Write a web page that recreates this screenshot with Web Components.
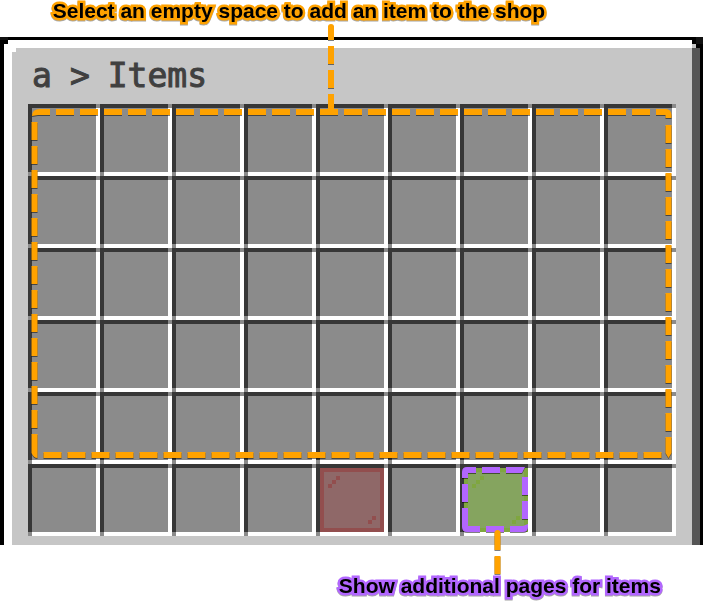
<!DOCTYPE html>
<html lang="en">
<head>
<meta charset="utf-8">
<title>Shop items</title>
<style>
  body { margin: 0; background: #fff; }
</style>
</head>
<body>
<shop-guide></shop-guide>
<script>
class ShadowElement extends HTMLElement {
  constructor() {
    super();
    this.attachShadow({ mode: 'open' }).innerHTML = this.render();
  }
  render() { return '<slot></slot>'; }
}

/* Outlined caption */
customElements.define('callout-label', class extends ShadowElement {
  render() {
    return `<style>
      :host { display: block; font: bold 21px/22px "Liberation Sans", Arial, sans-serif; color: #000; white-space: nowrap; }
      p { margin: 0; -webkit-text-stroke: 5px var(--outline, #ffa200); paint-order: stroke fill; stroke-linejoin: round;
          filter: drop-shadow(0 1px 0 rgb(0 0 0 / .35)); }
    </style><p><slot></slot></p>`;
  }
});

/* Breadcrumb title */
customElements.define('crumb-title', class extends ShadowElement {
  render() {
    return `<style>
      :host { display: block; }
      h1 { margin: 0; display: flex; gap: 18px; font: normal 33px/40px "DejaVu Sans Mono", monospace; color: #404040; -webkit-text-stroke: 1px #404040; }
    </style><h1><slot name="shop"></slot><span>&gt;</span><slot name="page"></slot></h1>`;
  }
});

/* Coloured glass pane */
customElements.define('glass-pane', class extends ShadowElement {
  render() {
    return `<style>
      :host { display: block; height: 100%; }
      svg { display: block; width: 100%; height: 100%; }
      .edge { fill: var(--edge); } .face { fill: var(--face); }
    </style>
    <svg viewBox="0 0 16 16" shape-rendering="crispEdges" aria-hidden="true">
      <path class="edge" d="M0 0h16v16H0z"/><path class="face" d="M1 1h14v14H1z"/>
      <path class="edge" d="M4 2h1v1H4zM3 3h1v1H3zM2 4h1v1H2zM13 12h1v1h-1zM12 13h1v1h-1z"/>
    </svg>`;
  }
});

/* Inventory slot */
customElements.define('item-slot', class extends ShadowElement {
  render() {
    return `<style>
      :host { display: block; aspect-ratio: 1; }
      button { display: block; box-sizing: border-box; width: 100%; height: 100%; margin: 0; padding: 4px; border: 0; cursor: pointer;
        background:
          linear-gradient(#373737, #373737) left top / calc(100% - 4px) 4px no-repeat,
          linear-gradient(#373737, #373737) left top / 4px calc(100% - 4px) no-repeat,
          linear-gradient(#fff, #fff) right bottom / 4px calc(100% - 4px) no-repeat,
          linear-gradient(#fff, #fff) right bottom / calc(100% - 4px) 4px no-repeat,
          #8b8b8b; }
    </style><button type="button"><slot></slot></button>`;
  }
  connectedCallback() {
    this.shadowRoot.querySelector('button').setAttribute('aria-label', this.getAttribute('label') || 'Empty slot');
  }
});

/* Dashed highlights and leader lines over the grid */
customElements.define('guide-lines', class extends ShadowElement {
  render() {
    return `<style>
      :host { display: block; position: absolute; inset: 0; pointer-events: none; }
      svg { display: block; width: 100%; height: 100%; overflow: visible; filter: drop-shadow(0 1px 0 rgb(0 0 0 / .5)); }
      path { fill: none; stroke-width: 6; }
      .add { stroke: #ffa200; } .more { stroke: #b266ff; }
      .dash { stroke-dasharray: 18 6; }
      .cap { stroke: none; fill: #ffa200; }
      .corner { stroke: none; fill: #b266ff; }
    </style>
    <svg viewBox="0 0 648 432" aria-hidden="true">
      <g class="add">
        <path class="dash" d="M28 8H628"/>
        <path class="cap" d="M4 12q0-7 8-7h10v6h-12zM628 5h10q5 0 5.500 6v3h-6v-3h-9.500z"/>
        <path class="dash" d="M640.5 21V333"/>
        <path class="dash" d="M15.500 351H634"/>
        <path class="dash" d="M6.500 18V330"/>
        <path class="cap" d="M3.500 330h6v24q-4 0-6-5zM637.500 333h6v16l-3 5-3-5z"/>
        <path class="cap" d="M300-64v-13q0-3 3-3t3 3v13z"/>
        <path class="dash" d="M303-58V-16"/>
        <path class="cap" d="M300-10h6v18q0 3-3 3t-3-3z"/>
      </g>
      <g class="more">
        <path class="dash" d="M454 366H472"/>
        <path class="dash" d="M437 380V422"/>
        <path class="dash" d="M458 425H476"/>
        <path class="dash" d="M497 373V415"/>
        <path class="corner" d="M434 374v-6q0-5 5-5h9v6h-8v5zM478 363h19l-3 6h-16zM434 418h6v4h12v6h-13q-5 0-5-5zM482 422h13l5-2v3q0 5-5 5h-13z"/>
      </g>
      <g class="add">
        <path class="cap" d="M466.500 446v-17q0-3 3-3t3 3v17z"/>
        <path d="M469.500 452V470"/>
      </g>
    </svg>`;
  }
});

/* Grid of slots */
customElements.define('slot-grid', class extends ShadowElement {
  render() {
    const cells = Array.from({ length: 54 }, (_, i) => {
      if (i === 49) return '<item-slot label="Close"><glass-pane class="red"></glass-pane></item-slot>';
      if (i === 51) return '<item-slot label="Next page"><glass-pane class="green"></glass-pane></item-slot>';
      return '<item-slot></item-slot>';
    }).join('');
    return `<style>
      :host { display: block; position: relative; }
      .grid { display: grid; grid-template-columns: repeat(9, 1fr); }
      .red { --edge: #924e4e; --face: #8f6868; }
      .green { --edge: #7fa63f; --face: #85a45f; }
    </style><div class="grid">${cells}</div><guide-lines></guide-lines>`;
  }
});

/* Bevelled chest window */
customElements.define('chest-window', class extends ShadowElement {
  render() {
    return `<style>
      :host { display: block; position: relative; border: solid #000; border-width: 3px 3px 0 4px; }
      .bevel { border: solid; border-width: 8px 8px 0 8px; border-color: #fff #555 #fff #fff; padding: 8px 16px 9px; background: #c6c6c6; }
      header { padding: 0 4px 8px; }
      .corner { position: absolute; top: -3px; height: 16px; }
      .left { left: -4px; width: 20px; } .right { right: -3px; width: 11px; }
    </style>
    <div class="bevel"><header><slot name="title"></slot></header><slot></slot></div>
    <svg class="corner left" viewBox="0 0 20 16" shape-rendering="crispEdges" aria-hidden="true">
      <path fill="#111" d="M0 0h8v3H0z"/><path d="M0 3h8v4H4v4H0z"/><path fill="#fff" d="M12 11h4v4h-4z"/>
    </svg>
    <svg class="corner right" viewBox="0 0 11 16" shape-rendering="crispEdges" aria-hidden="true">
      <path d="M0 3h4v4h4v4h3V0H0z"/><path d="M0 3h4v4H0zM4 7h4v4H4z"/><path fill="#111" d="M4 0h7v7H4z"/><path fill="#c6c6c6" d="M0 7h4v4H0z"/>
    </svg>`;
  }
});

customElements.define('shop-guide', class extends ShadowElement {
  render() {
    return `<style>
      :host { display: block; }
      .top { padding: 0 0 15px 7.5%; }
      .bottom { padding: 30px 0 4px 48.2%; --outline: #b266ff; }
    </style>
    <main>
      <callout-label class="top">Select an empty space to add an item to the shop</callout-label>
      <chest-window>
        <crumb-title slot="title"><span slot="shop">a</span><span slot="page">Items</span></crumb-title>
        <slot-grid></slot-grid>
      </chest-window>
      <callout-label class="bottom">Show additional pages for items</callout-label>
    </main>`;
  }
});
</script>
</body>
</html>
